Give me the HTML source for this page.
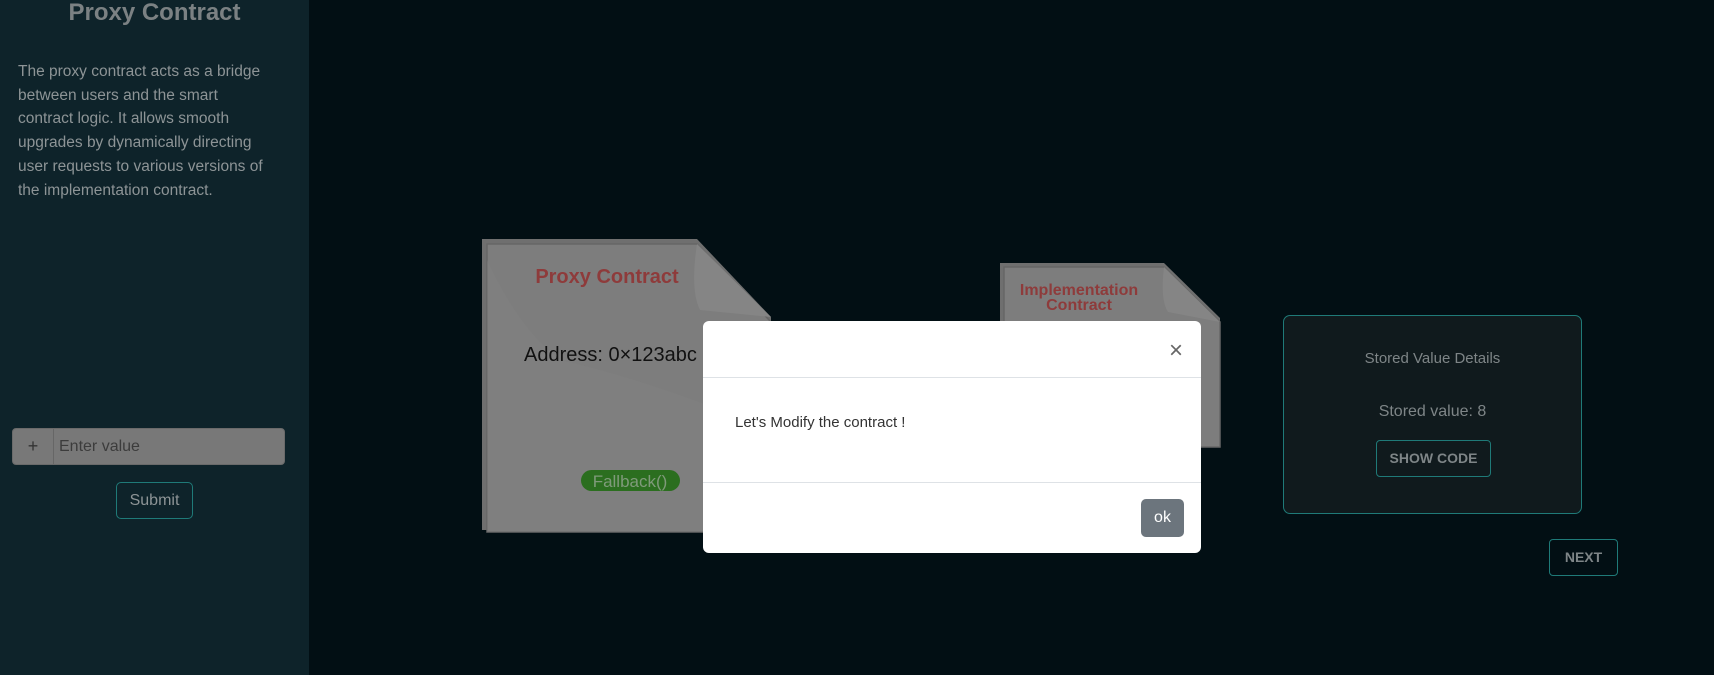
<!DOCTYPE html>
<html><head><meta charset="utf-8"><style>
*{margin:0;padding:0;box-sizing:border-box}
body{width:1714px;height:675px;background:#020f14;font-family:"Liberation Sans",sans-serif;position:relative;overflow:hidden}
.side{position:absolute;left:0;top:0;width:309px;height:675px;background:#0e232a}
.side h1{position:absolute;left:0;width:309px;top:-1px;text-align:center;font-size:24px;color:#7b8183;font-weight:bold}
.side p{position:absolute;left:18px;top:60px;width:252px;font-size:15.5px;line-height:23.7px;color:#8d9496}
.inp{position:absolute;left:12px;top:428px;width:273px;height:37px;background:#787878;border-radius:4px;border:1px solid #6a6a6a}
.inp .pl{position:absolute;left:0;top:0;width:41px;height:35px;border-right:1px solid #666;text-align:center;line-height:35px;font-size:18px;color:#333}
.inp .tx{position:absolute;left:46px;top:0;line-height:35px;font-size:16px;color:#3c3c3c}
.sub{position:absolute;left:116px;top:482px;width:77px;height:37px;border:1px solid #1f7a78;border-radius:5px;color:#8d9496;font-size:16px;text-align:center;line-height:35px}
.doc{position:absolute}
.mod{position:absolute;left:703px;top:321px;width:498px;height:232px;background:#fff;border-radius:6px}
.mod .l1{position:absolute;left:0;right:0;top:56px;border-top:1px solid #dee2e6}
.mod .l2{position:absolute;left:0;right:0;top:161px;border-top:1px solid #dee2e6}
.mod .x{position:absolute;left:466px;top:16px;font-size:24px;color:#666}
.mod .t{position:absolute;left:32px;top:93px;font-size:15px;color:#333}
.mod .ok{position:absolute;left:438px;top:178px;width:43px;height:38px;background:#6c757d;border-radius:5px;color:#fff;font-size:16px;text-align:center;line-height:38px}
.box{position:absolute;left:1283px;top:315px;width:299px;height:199px;border:1px solid #1f7a78;border-radius:7px;background:#101a1d;color:#7e8587;text-align:center}
.btn{position:absolute;border:1px solid #1f7a78;border-radius:4px;color:#7e8587;font-weight:bold;font-size:14px;text-align:center}
</style></head><body>
<div class="side">
<h1>Proxy Contract</h1>
<p>The proxy contract acts as a bridge between users and the smart contract logic. It allows smooth upgrades by dynamically directing user requests to various versions of the implementation contract.</p>
<div class="inp"><div class="pl">+</div><div class="tx">Enter value</div></div>
<div class="sub">Submit</div>
</div>

<svg class="doc" style="left:0;top:0" width="1714" height="675">
<polygon points="482,239 697,239 771,317 771,530 482,530" fill="#6f6f6f"/>
<polygon points="487,244 697,244 771,322 771,532 487,532" fill="#7d7d7d" stroke="#666" stroke-width="1.5"/>
<path d="M697,244 Q690,290 700,310 L771,317 Z" fill="#858585"/>
<path d="M487,260 Q520,330 560,360 Q650,380 771,430 L771,532 L487,532 Z" fill="#838383" opacity="0.4"/>
<text x="607" y="283" text-anchor="middle" font-family="Liberation Sans" font-weight="bold" font-size="20" fill="#8e3b3b">Proxy Contract</text>
<text x="524" y="361" font-family="Liberation Sans" font-size="20" fill="#111">Address: 0×123abc</text>
<rect x="581" y="470" width="99" height="21" rx="10.5" fill="#2b6e1f"/>
<text x="630" y="487" text-anchor="middle" font-family="Liberation Sans" font-size="17" fill="#7f9a7a">Fallback()</text>
<polygon points="1000,263 1164,263 1220,318 1220,447 1000,447" fill="#6f6f6f"/>
<polygon points="1004,267 1164,267 1220,322 1220,447 1004,447" fill="#7d7d7d" stroke="#666" stroke-width="1.5"/>
<path d="M1164,267 Q1160,300 1168,312 L1220,322 Z" fill="#858585"/>
<text x="1079" y="295" text-anchor="middle" font-family="Liberation Sans" font-weight="bold" font-size="16" fill="#8e3b3b">Implementation</text>
<text x="1079" y="310" text-anchor="middle" font-family="Liberation Sans" font-weight="bold" font-size="16" fill="#8e3b3b">Contract</text>
</svg>

<div class="box">
<div style="position:absolute;left:0;right:0;top:34px;font-size:15px">Stored Value Details</div>
<div style="position:absolute;left:0;right:0;top:87px;font-size:16px">Stored value: 8</div>
</div>
<div class="btn" style="left:1376px;top:440px;width:115px;height:37px;line-height:35px">SHOW CODE</div>
<div class="btn" style="left:1549px;top:539px;width:69px;height:37px;line-height:35px">NEXT</div>

<div class="mod">
<div class="x">×</div>
<div class="l1"></div>
<div class="t">Let's Modify the contract !</div>
<div class="l2"></div>
<div class="ok">ok</div>
</div>
</body></html>
